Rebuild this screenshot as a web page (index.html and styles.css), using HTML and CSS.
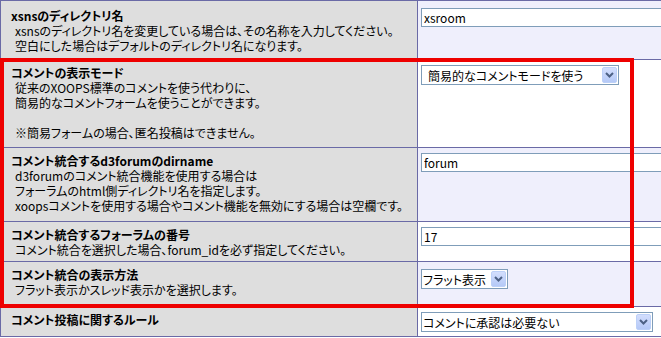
FILE: index.html
```html
<!DOCTYPE html>
<html lang="ja">
<head>
    <meta charset="UTF-8">
    <title>コメント設定</title>
    <link rel="stylesheet" href="styles.css">
</head>
<body>
    <div class="frame">
        <table class="outer">
            <tr class="r1">
                <td class="head">
                    <div class="title">xsnsのディレクトリ名</div>
                    <div class="desc">xsnsのディレクトリ名を変更している場合は、その名称を入力してください。<br>空白にした場合はデフォルトのディレクトリ名になります。</div>
                </td>
                <td class="even"><input type="text" class="text" value="xsroom"></td>
            </tr>
            <tr class="r2">
                <td class="head">
                    <div class="title">コメントの表示モード</div>
                    <div class="desc">従来のXOOPS標準のコメントを使う代わりに、<br>簡易的なコメントフォームを使うことができます。<br><br>※簡易フォームの場合、匿名投稿はできません。</div>
                </td>
                <td class="odd">
                    <div class="select w-long">
                        <span class="select-text pad">簡易的なコメントモードを使う</span>
                        <span class="select-btn"><svg width="9" height="6" viewBox="0 0 9 6"><path d="M1 1 L4.5 4.5 L8 1" fill="none" stroke="#4d6185" stroke-width="2"/></svg></span>
                    </div>
                </td>
            </tr>
            <tr class="r3">
                <td class="head">
                    <div class="title">コメント統合するd3forumのdirname</div>
                    <div class="desc">d3forumのコメント統合機能を使用する場合は<br>フォーラムのhtml側ディレクトリ名を指定します。<br>xoopsコメントを使用する場合やコメント機能を無効にする場合は空欄です。</div>
                </td>
                <td class="even"><input type="text" class="text" value="forum"></td>
            </tr>
            <tr class="r4">
                <td class="head">
                    <div class="title">コメント統合するフォーラムの番号</div>
                    <div class="desc">コメント統合を選択した場合、forum_idを必ず指定してください。</div>
                </td>
                <td class="odd"><input type="text" class="text" value="17"></td>
            </tr>
            <tr class="r5">
                <td class="head">
                    <div class="title">コメント統合の表示方法</div>
                    <div class="desc">フラット表示かスレッド表示かを選択します。</div>
                </td>
                <td class="even">
                    <div class="select w-short">
                        <span class="select-text">フラット表示</span>
                        <span class="select-btn"><svg width="9" height="6" viewBox="0 0 9 6"><path d="M1 1 L4.5 4.5 L8 1" fill="none" stroke="#4d6185" stroke-width="2"/></svg></span>
                    </div>
                </td>
            </tr>
            <tr class="r6">
                <td class="head">
                    <div class="title">コメント投稿に関するルール</div>
                </td>
                <td class="odd">
                    <div class="select w-wide">
                        <span class="select-text">コメントに承認は必要ない</span>
                        <span class="select-btn"><svg width="9" height="6" viewBox="0 0 9 6"><path d="M1 1 L4.5 4.5 L8 1" fill="none" stroke="#4d6185" stroke-width="2"/></svg></span>
                    </div>
                </td>
            </tr>
        </table>
        <div class="highlight"></div>
    </div>
</body>
</html>
```

FILE: styles.css
```css
html, body {
    margin: 0;
    padding: 0;
    overflow: hidden;
    background: #ffffff;
}
body {
    font-family: "Noto Sans CJK JP", "Noto Sans", sans-serif;
    font-size: 12px;
    line-height: 15px;
    color: #000;
    font-feature-settings: "palt" 1;
}
.frame {
    position: relative;
    width: 661px;
    height: 338px;
    overflow: hidden;
}
.outer {
    width: 720px;
    table-layout: fixed;
    border-collapse: separate;
    border-spacing: 0;
    border-left: 1px solid #6a6aa6;
    border-top: 1px solid #6a6aa6;
}
.outer td {
    vertical-align: top;
    border-right: 1px solid #6a6aa6;
    border-bottom: 1px solid #6a6aa6;
    box-sizing: border-box;
    padding-top: 5px;
    padding-bottom: 0;
}
/* row heights from the original admin table */
.r1 td { height: 59px; padding-top: 7px; }
.r2 td { height: 88px; }
.r3 td { height: 74px; }
.r4 td { height: 40px; }
.r5 td { height: 45px; }
.r5 td.even { padding-top: 7px; }
.r6 td { height: 30px; }

.head {
    width: 417px;
    background: #dedede;
    padding-left: 10px;
    padding-right: 4px;
}
.even {
    background: #efeffc;
    padding-left: 3px;
    padding-right: 3px;
}
.odd {
    background: #ffffff;
    padding-left: 3px;
    padding-right: 3px;
}
.title {
    font-weight: bold;
}
.desc {
    padding-left: 4px;
}
.text {
    display: block;
    width: 300px;
    height: 19px;
    margin: 0;
    padding: 0 2px;
    border: 1px solid #7f9db9;
    box-sizing: border-box;
    font-family: "Noto Sans CJK JP", "Noto Sans", sans-serif;
    font-size: 12px;
    font-feature-settings: "palt" 1;
    background: #fff;
    color: #000;
}
.select {
    display: flex;
    align-items: center;
    height: 20px;
    border: 1px solid #7f9db9;
    background: #fff;
    box-sizing: border-box;
    padding-left: 1px;
}
.select-text {
    flex: 1;
    white-space: nowrap;
    overflow: hidden;
}
.select-text.pad {
    padding-left: 5px;
}
.select-btn {
    display: flex;
    align-items: center;
    justify-content: center;
    width: 15px;
    height: 16px;
    margin-right: 1px;
    border-radius: 2px;
    background: linear-gradient(#d3defd, #b5c9f7);
    box-sizing: border-box;
    border: 1px solid #bcd0f8;
}
.w-long { width: 198px; }
.w-short { width: 87px; }
.w-wide { width: 232px; }
.highlight {
    position: absolute;
    left: 0;
    top: 58px;
    width: 634px;
    height: 250px;
    border: 4px solid #ee0000;
    box-sizing: border-box;
}
```
